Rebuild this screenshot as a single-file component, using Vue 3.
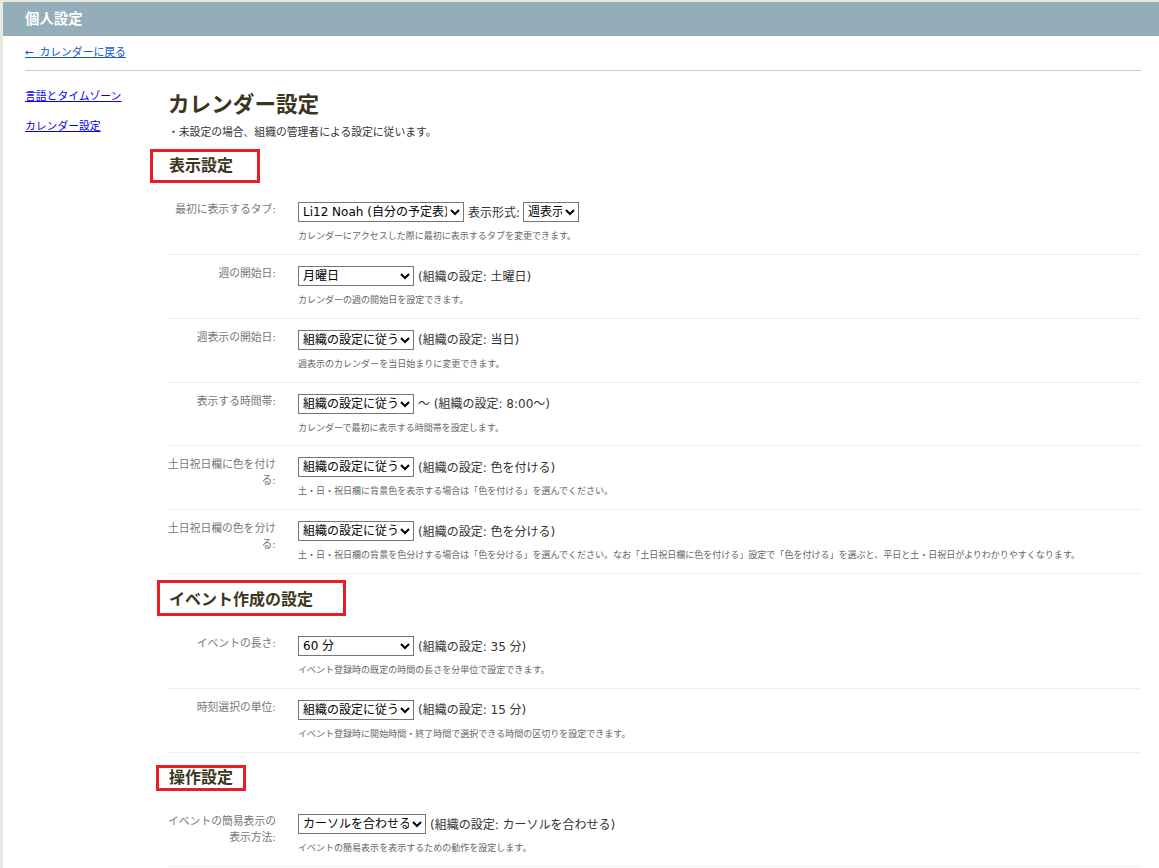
<template>
  <div class="page">
    <div class="panel">
      <div class="panel-title">個人設定</div>
      <div class="panel-body">
        <div class="back"><a href="#">← カレンダーに戻る</a></div>
        <hr class="rule" />
        <div class="columns">
          <nav class="side">
            <a href="#">言語とタイムゾーン</a>
            <a href="#">カレンダー設定</a>
          </nav>
          <main class="content">
            <h1>カレンダー設定</h1>
            <p class="note">・未設定の場合、組織の管理者による設定に従います。</p>
            <section v-for="section in sections" :key="section.title" :class="section.cls">
              <h2>{{ section.title }}</h2>
              <div v-for="row in section.rows" :key="row.label" class="row">
                <label class="row-label">{{ row.label }}</label>
                <div class="row-field">
                  <div class="controls">
                    <select :style="{ width: row.width + 'px' }">
                      <option>{{ row.value }}</option>
                    </select>
                    <template v-if="row.extra">
                      <span>{{ row.extra }}</span>
                      <select class="small"><option>{{ row.extraValue }}</option></select>
                    </template>
                    <span v-if="row.org">{{ row.org }}</span>
                  </div>
                  <p class="desc">{{ row.desc }}</p>
                </div>
              </div>
            </section>
          </main>
        </div>
      </div>
    </div>
  </div>
</template>

<script setup>
const follow = '組織の設定に従う'

const sections = [
  {
    title: '表示設定',
    cls: 'display',
    rows: [
      {
        label: '最初に表示するタブ:',
        value: 'Li12 Noah (自分の予定表)',
        width: 166,
        extra: '表示形式:',
        extraValue: '週表示',
        desc: 'カレンダーにアクセスした際に最初に表示するタブを変更できます。',
      },
      {
        label: '週の開始日:',
        value: '月曜日',
        width: 116,
        org: '(組織の設定: 土曜日)',
        desc: 'カレンダーの週の開始日を設定できます。',
      },
      {
        label: '週表示の開始日:',
        value: follow,
        width: 116,
        org: '(組織の設定: 当日)',
        desc: '週表示のカレンダーを当日始まりに変更できます。',
      },
      {
        label: '表示する時間帯:',
        value: follow,
        width: 116,
        org: '～ (組織の設定: 8:00～)',
        desc: 'カレンダーで最初に表示する時間帯を設定します。',
      },
      {
        label: '土日祝日欄に色を付ける:',
        value: follow,
        width: 116,
        org: '(組織の設定: 色を付ける)',
        desc: '土・日・祝日欄に背景色を表示する場合は「色を付ける」を選んでください。',
      },
      {
        label: '土日祝日欄の色を分ける:',
        value: follow,
        width: 116,
        org: '(組織の設定: 色を分ける)',
        desc: '土・日・祝日欄の背景を色分けする場合は「色を分ける」を選んでください。なお「土日祝日欄に色を付ける」設定で「色を付ける」を選ぶと、平日と土・日祝日がよりわかりやすくなります。',
      },
    ],
  },
  {
    title: 'イベント作成の設定',
    cls: 'create',
    rows: [
      {
        label: 'イベントの長さ:',
        value: '60 分',
        width: 116,
        org: '(組織の設定: 35 分)',
        desc: 'イベント登録時の既定の時間の長さを分単位で設定できます。',
      },
      {
        label: '時刻選択の単位:',
        value: follow,
        width: 116,
        org: '(組織の設定: 15 分)',
        desc: 'イベント登録時に開始時間・終了時間で選択できる時間の区切りを設定できます。',
      },
    ],
  },
  {
    title: '操作設定',
    cls: 'operate',
    rows: [
      {
        label: 'イベントの簡易表示の表示方法:',
        value: 'カーソルを合わせる',
        width: 128,
        org: '(組織の設定: カーソルを合わせる)',
        desc: 'イベントの簡易表示を表示するための動作を設定します。',
      },
    ],
  },
]
</script>

<style>
html,
body {
  margin: 0;
  height: 868px;
  overflow: hidden;
}
</style>

<style scoped>
.page {
  height: 868px;
  padding: 2px 0 0 3px;
  box-sizing: border-box;
  background: #e9e9df;
  overflow: hidden;
  font-family: "DejaVu Sans", "Noto Sans CJK JP", sans-serif;
  font-size: 12px;
  color: #333;
}

.panel {
  background: #fff;
  height: 100%;
}

.panel-title {
  height: 34px;
  line-height: 34px;
  padding-left: 22px;
  background: #93adb9;
  color: #fff;
  font-size: 14.4px;
  font-weight: bold;
}

.panel-body {
  padding: 0 18px 0 22px;
}

.back {
  height: 34px;
  line-height: 34px;
  font-size: 10.8px;
  word-spacing: 2px;
}

.back a {
  color: #15c;
}

.rule {
  margin: 0;
  border: 0;
  border-top: 1px solid #ccc;
}

.columns {
  display: flex;
}

.side {
  width: 143px;
  flex-shrink: 0;
  padding-top: 17px;
  display: flex;
  flex-direction: column;
  gap: 12px;
  font-size: 10.8px;
  line-height: 18px;
}

.side a {
  color: #00e;
  align-self: flex-start;
}

.content {
  flex: 1;
  min-width: 0;
}

h1 {
  margin: 21px 0 0;
  font-size: 21.6px;
  line-height: 26px;
  color: #3a3620;
}

.note {
  margin: 7px 0 0;
  font-size: 10.8px;
  line-height: 16px;
}

h2 {
  margin: 0;
  border: 3px solid #ed1c24;
  color: #3a3620;
  font-size: 16px;
  box-sizing: border-box;
}

.display h2 {
  width: 110px;
  height: 34px;
  margin: 8px 0 8.25px -18px;
  padding-left: 16px;
  line-height: 27px;
}

.create h2 {
  width: 189px;
  height: 36px;
  margin: 6px 0 9.25px -11px;
  padding-left: 9px;
  line-height: 34px;
}

.operate h2 {
  width: 90px;
  height: 26px;
  margin: 12.5px 0 12px -12px;
  padding-left: 10px;
  line-height: 20px;
}

.row {
  display: flex;
  box-sizing: border-box;
  height: 63.75px;
  padding-top: 11px;
  border-bottom: 1px solid #eee;
}

.row-label {
  width: 108px;
  flex-shrink: 0;
  text-align: right;
  font-size: 10.8px;
  line-height: 16px;
  color: #777;
}

.row-field {
  margin-left: 22px;
  min-width: 0;
}

.controls {
  display: flex;
  align-items: center;
  gap: 4px;
  height: 20px;
  white-space: nowrap;
}

.controls span {
  padding-bottom: 2px;
}

select {
  height: 20px;
  padding: 0;
  background: #fff;
  border: 1px solid #767676;
  border-radius: 0;
  font-family: inherit;
  font-size: 12px;
  color: #000;
}

.small {
  width: 56px;
  margin-left: -1px;
}

.desc {
  margin: 7px 0 0;
  font-size: 9.03px;
  line-height: 14px;
  color: #666;
  white-space: nowrap;
}
</style>
